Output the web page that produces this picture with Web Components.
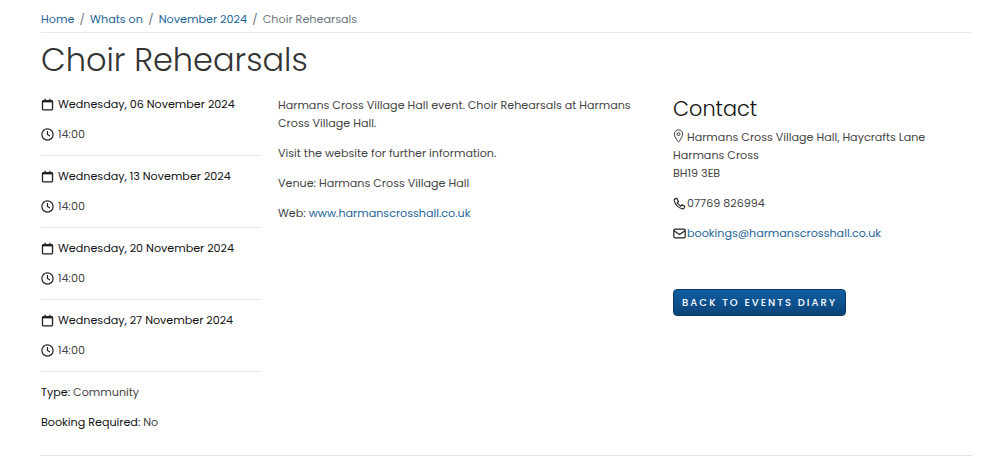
<!DOCTYPE html>
<html><head><meta charset="utf-8"><style>
html,body{margin:0;background:#fff}
body{font-family:Poppins,"Open Sans","Noto Sans",sans-serif;color:#444;overflow:hidden}
</style></head><body>
<event-page></event-page>
<script>
const ICONS={
cal:'<svg width="13" height="13" viewBox="0 0 16 16"><path fill="none" stroke="#222" stroke-width="1.600" d="M2.800 3.200h10.400a1 1 0 0 1 1 1v9.400a1 1 0 0 1-1 1H2.800a1 1 0 0 1-1-1V4.200a1 1 0 0 1 1-1z"/><path fill="#222" d="M2 3h12v2.400H2z"/><path stroke="#222" stroke-width="1.600" d="M5 1v3M11 1v3"/></svg>',
clock:'<svg width="13" height="13" viewBox="0 0 16 16"><circle cx="8" cy="8" r="6.900" fill="none" stroke="#222" stroke-width="1.500"/><path fill="none" stroke="#222" stroke-width="1.500" d="M8 3.800V8l3 1.800"/></svg>',
pin:'<svg width="11" height="14" viewBox="0 0 12 16"><path fill="none" stroke="#333" stroke-width="1.100" d="M6 1a4.800 4.800 0 0 0-4.800 4.800C1.200 9 6 15 6 15s4.800-6 4.800-9.200A4.800 4.800 0 0 0 6 1z"/><circle cx="6" cy="5.800" r="1.700" fill="none" stroke="#333" stroke-width="1.100"/></svg>',
phone:'<svg width="13" height="13" viewBox="0 0 16 16"><path fill="none" stroke="#222" stroke-width="1.400" d="M4.600 1.500 2.400 2.300C1.500 2.700 1.200 3.700 1.500 4.800c1.400 4.700 5 8.300 9.700 9.700 1.100.3 2.100 0 2.500-.9l.8-2.200-3.300-1.800-1.600 1.700C7.400 9.900 6.100 8.600 5.200 7.400l1.600-1.700z"/></svg>',
mail:'<svg width="13" height="11" viewBox="0 0 16 13"><rect x="1" y="1" width="14" height="11" rx="1.500" fill="none" stroke="#222" stroke-width="1.500"/><path fill="none" stroke="#222" stroke-width="1.500" d="M1.200 3 8 7.800 14.800 3"/></svg>'
};
class SvgIcon extends HTMLElement{connectedCallback(){if(this.shadowRoot)return;const s=this.attachShadow({mode:'open'});s.innerHTML='<style>:host{display:inline-flex;align-items:center;vertical-align:-2px}svg{display:block}</style>'+ICONS[this.getAttribute('name')]}}
customElements.define('svg-icon',SvgIcon);
class BreadCrumbs extends HTMLElement{constructor(){super();const s=this.attachShadow({mode:'open'});s.innerHTML=`<style>
:host{display:flex;align-items:center;height:33px;box-sizing:border-box;border-bottom:1px solid #e9e9e9;font-size:11.200px;color:#6c757d;padding-top:5px}
a{color:#1d6497;text-decoration:none}i{font-style:normal;margin:0 5.200px}
</style><a>Home</a><i>/</i><a>Whats on</a><i>/</i><a>November 2024</a><i>/</i><span>Choir Rehearsals</span>`}}
customElements.define('bread-crumbs',BreadCrumbs);
class DateRow extends HTMLElement{constructor(){super();const s=this.attachShadow({mode:'open'});s.innerHTML=`<style>
:host{display:block;border-bottom:1px solid #e6e6e6;height:72px;box-sizing:border-box;padding-top:11px;font-size:11.150px;line-height:18px}
div{display:flex;align-items:center;height:18px;margin-bottom:12px}
.d{color:#111;font-weight:400;gap:4px}.t{color:#444;gap:4px}
</style><div class="d"><svg-icon name="cal"></svg-icon><span><slot></slot></span></div><div class="t"><svg-icon name="clock"></svg-icon><span>14:00</span></div>`}}
customElements.define('date-row',DateRow);
class EventPage extends HTMLElement{constructor(){super();const s=this.attachShadow({mode:'open'});s.innerHTML=`<style>
:host{display:block;width:931px;margin-left:41px;height:457px;box-sizing:border-box;font-size:11.150px;line-height:18px;color:#444}
h1{font-weight:300;font-size:32px;line-height:40px;margin:7px 0 0;color:#333}
.cols{display:grid;grid-template-columns:219px 377px 1fr;column-gap:18px;margin-top:4px;height:372px;border-bottom:1px solid #e2e2e2;box-sizing:border-box}
p{margin:0 0 12px}
b{font-weight:400;color:#111}
a{color:#1d6497;text-decoration:none}
h2{font-weight:300;font-size:20.800px;line-height:26px;margin:0 0 6px;color:#111}
.mid{padding-top:12px}
.right{padding-top:12px;padding-left:0}
.ic{display:flex;gap:1px;align-items:center}
.btn{display:inline-block;margin-top:35px;background:linear-gradient(#0f5ea5,#0b4477);color:#fff;font-size:10px;line-height:15px;letter-spacing:2.050px;padding:5px 8px;border-radius:4px;border:1px solid #0a3c6a;font-weight:500}
.meta{margin-top:11px}
</style>
<bread-crumbs></bread-crumbs><h1>Choir Rehearsals</h1>
<div class="cols">
<div class="left">
<date-row>Wednesday, 06 November 2024</date-row>
<date-row>Wednesday, 13 November 2024</date-row>
<date-row>Wednesday, 20 November 2024</date-row>
<date-row>Wednesday, 27 November 2024</date-row>
<div class="meta"><p><b>Type:</b> Community</p><p><b>Booking Required:</b> No</p></div>
</div>
<div class="mid">
<p>Harmans Cross Village Hall event. Choir Rehearsals at Harmans Cross Village Hall.</p>
<p>Visit the website for further information.</p>
<p>Venue: Harmans Cross Village Hall</p>
<p>Web: <a>www.harmanscrosshall.co.uk</a></p>
</div>
<div class="right">
<h2>Contact</h2>
<p><svg-icon name="pin"></svg-icon> Harmans Cross Village Hall, Haycrafts Lane<br>Harmans Cross<br>BH19 3EB</p>
<p class="ic"><svg-icon name="phone"></svg-icon>07769 826994</p>
<p class="ic"><svg-icon name="mail"></svg-icon><a>bookings@harmanscrosshall.co.uk</a></p>
<span class="btn">BACK TO EVENTS DIARY</span>
</div>
</div>`}}
customElements.define('event-page',EventPage);
</script></body></html>
